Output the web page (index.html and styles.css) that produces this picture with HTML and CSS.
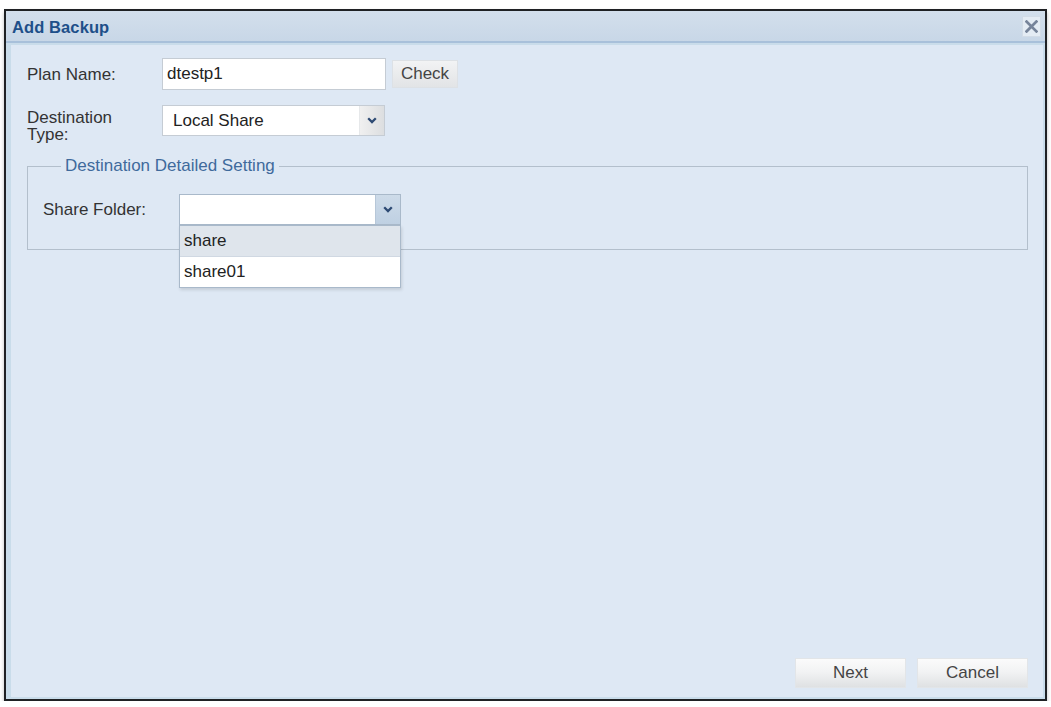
FILE: index.html
```html
<!DOCTYPE html>
<html>
<head>
<meta charset="utf-8">
<link rel="stylesheet" href="styles.css">
</head>
<body>
<div class="dialog">
  <div class="titlebar">
    <span class="title">Add Backup</span>
    <span class="close"><svg width="13" height="13" viewBox="0 0 12 12"><path d="M1.5 1.5 L10.5 10.5 M10.5 1.5 L1.5 10.5" stroke="#76849a" stroke-width="2.6" stroke-linecap="square"/></svg></span>
  </div>
  <div class="body">
    <div class="row row-plan">
      <label class="lbl">Plan Name:</label>
      <div class="input">dtestp1</div>
      <button class="btn-check">Check</button>
    </div>
    <div class="row row-type">
      <label class="lbl lbl-2">Destination<br>Type:</label>
      <div class="combo">
        <span class="combo-text">Local Share</span>
        <span class="trigger"><svg width="10" height="7" viewBox="0 0 10 7"><path d="M1.2 1.2 L5 5 L8.8 1.2" fill="none" stroke="#2d4a73" stroke-width="2.3"/></svg></span>
      </div>
    </div>
    <fieldset class="group">
      <legend>Destination Detailed Setting</legend>
      <div class="row row-share">
        <label class="lbl lbl-share">Share Folder:</label>
        <div class="combo combo-share">
          <span class="combo-text"></span>
          <span class="trigger trigger-active"><svg width="10" height="7" viewBox="0 0 10 7"><path d="M1.2 1.2 L5 5 L8.8 1.2" fill="none" stroke="#2d4a73" stroke-width="2.3"/></svg></span>
          <ul class="list">
            <li class="item item-hover">share</li>
            <li class="item">share01</li>
          </ul>
        </div>
      </div>
    </fieldset>
    <div class="footer">
      <button class="btn">Next</button>
      <button class="btn">Cancel</button>
    </div>
  </div>
</div>
</body>
</html>
```
FILE: styles.css
```css
html, body {
  margin: 0;
  padding: 0;
  background: #ffffff;
}
body {
  font-family: "Liberation Sans", Arial, sans-serif;
  font-size: 17px;
  color: #333;
}
.dialog {
  margin: 9px 0 0 4px;
  width: 1039px;
  height: 688px;
  border: 2px solid #1f2124;
  display: flex;
  flex-direction: column;
  box-shadow: 0 3px 4px rgba(0,0,0,0.25);
  background: #c9dcea;
}
.titlebar {
  height: 30px;
  background: linear-gradient(#d3dfec, #c8d7e7);
  border-bottom: 2px solid #a8c0da;
  display: flex;
  align-items: center;
  justify-content: space-between;
  padding: 0 4px 0 6px;
}
.title {
  font-weight: bold;
  font-size: 16.5px;
  color: #1e4f89;
  letter-spacing: 0.1px;
  padding-top: 2px;
}
.close {
  width: 19px;
  height: 21px;
  background: #e4ecf4;
  border: 1px solid #d2dce7;
  box-sizing: border-box;
  display: flex;
  align-items: center;
  justify-content: center;
}
.body {
  flex: 1;
  margin: 2px 2px 2px 5px;
  background: #dee8f4;
  display: flex;
  flex-direction: column;
  padding: 13px 15px 9px 16px;
}
.row {
  display: flex;
  align-items: center;
}
.lbl {
  width: 135px;
  flex: none;
  color: #333;
  line-height: 17px;
}
.row-type {
  margin-top: 15px;
  align-items: flex-start;
}
.lbl-2 {
  padding-top: 4px;
}
.input {
  width: 224px;
  height: 32px;
  box-sizing: border-box;
  background: #fff;
  border: 1px solid #c5ccd4;
  padding: 0 4px;
  line-height: 30px;
  color: #222;
}
.btn-check {
  margin-left: 6px;
  width: 66px;
  height: 28px;
  border: 1px solid #dde1e5;
  background: linear-gradient(#f2f3f4, #e2e4e6);
  font-family: inherit;
  font-size: 17px;
  color: #444;
  padding: 0;
}
.combo {
  position: relative;
  width: 223px;
  height: 31px;
  box-sizing: border-box;
  background: #fff;
  border: 1px solid #c5ccd4;
  display: flex;
}
.combo-text {
  flex: 1;
  padding: 0 10px;
  line-height: 29px;
  color: #222;
}
.trigger {
  width: 24px;
  flex: none;
  background: linear-gradient(90deg, #f0f0f0, #dcdee0);
  border-left: 1px solid #e6e8ea;
  display: flex;
  align-items: center;
  justify-content: center;
}
.trigger-active {
  background: linear-gradient(#cddbe9, #bfd0e2);
  border-left: 1px solid #b7c7d8;
}
.group {
  margin: 14px 0 0 0;
  padding: 19px 15px 24px 15px;
  border: 1px solid #b3bfcc;
  min-width: 0;
}
.group legend {
  margin-left: 18px;
  padding: 0 4px;
  color: #3f6a9c;
  font-size: 17px;
  line-height: 18px;
}
.lbl-share {
  width: 136px;
}
.combo-share {
  width: 222px;
  border-color: #a9b9ca;
}
.list {
  position: absolute;
  top: 30px;
  left: -1px;
  width: 222px;
  margin: 0;
  padding: 0;
  list-style: none;
  background: #fff;
  border: 1px solid #a9b9ca;
  box-sizing: border-box;
  box-shadow: 1px 2px 3px rgba(0,0,0,0.12);
  z-index: 5;
}
.item {
  height: 30px;
  line-height: 30px;
  padding: 0 4px;
  color: #222;
}
.item-hover {
  background: #dfe5ec;
  border-bottom: 1px solid #d0d8e2;
}
.footer {
  margin-top: auto;
  display: flex;
  justify-content: flex-end;
  gap: 11px;
}
.btn {
  width: 111px;
  height: 30px;
  border: 1px solid #e2e5e8;
  background: linear-gradient(#fbfbfb 0%, #f2f3f4 45%, #dfe1e3 100%);
  font-family: inherit;
  font-size: 17px;
  color: #444;
  padding: 0;
}
```
